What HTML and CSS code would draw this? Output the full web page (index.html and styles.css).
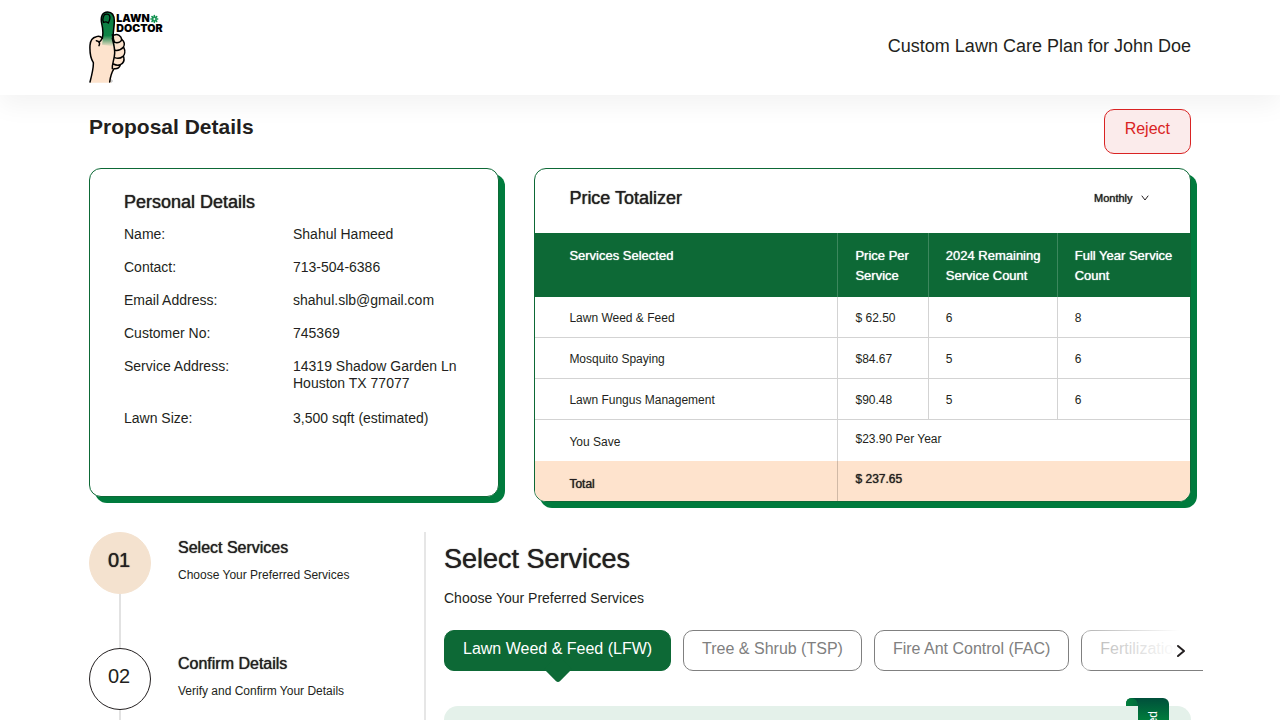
FILE: index.html
```html
<!DOCTYPE html>
<html lang="en">
<head>
  <meta charset="UTF-8" />
  <meta name="viewport" content="width=device-width, initial-scale=1.0"/>
  <title>Lawn Doctor - Custom Lawn Care Plan</title>
  <link rel="stylesheet" href="styles.css">
</head>
<body>
  <header class="site-header">
    <svg class="logo" viewBox="26 19 222 216" role="img" aria-label="Lawn Doctor">
      <defs>
        <linearGradient id="thumb" x1="0" y1="0" x2="0" y2="1">
          <stop offset="0" stop-color="#0b7a41"/>
          <stop offset="0.68" stop-color="#0f8547"/>
          <stop offset="1" stop-color="#fde3cd"/>
        </linearGradient>
      </defs>
      <path d="M29 234 C36 205 40 190 39 174 C30 160 28 140 29 122 C30 106 38 98 48 96 C54 94 60 95 65 96 L98 92 C108 88 118 92 123 100 C132 106 134 116 131 126 C136 138 134 148 130 154 C133 166 129 176 122 180 C120 188 112 192 104 192 C96 204 93 216 91 234 Z" fill="#fde3cd"/>
      <path d="M65 120 C70 92 69 74 64 56 C60 36 66 22 82 22 C98 22 102 34 102 50 C102 68 99 82 101 96 L104 126 Z" fill="url(#thumb)"/>
      <g fill="none" stroke="#000" stroke-width="4.5" stroke-linecap="round" stroke-linejoin="round">
        <path d="M29 232 C36 205 40 190 39 174 C30 160 28 140 29 122 C30 106 38 98 48 96 C56 93 62 96 66 101 C69 86 68 72 64 56 C60 36 66 22 82 22 C98 22 102 34 102 50 C102 68 97 84 99 98"/>
        <path d="M66 100 C63 107 60 110 56 113 M48 108 C57 110 60 116 56 123"/>
        <path d="M102 91 C112 87 123 94 124 104 C124 111 114 116 103 113 C99 106 98 98 96 90 M96 101 C99 115 104 130 103 146 C102 166 94 180 96 192"/>
        <path d="M124 104 C133 110 134 121 129 128 C122 136 112 138 104 137 M130 128 C136 139 133 150 128 155 C120 162 111 162 103 159 M130 156 C133 168 128 177 120 180 C113 183 105 181 99 178 M120 181 C117 190 109 193 101 192 C94 203 90 217 88 232"/>
      </g>
      <path d="M69 36 C72 27 85 26 88 34 C90 40 88 47 84 55 C79 51 75 51 70 53 C67 47 67 41 69 36 Z" fill="#0b7a41" stroke="#000" stroke-width="4"/>
      <text class="logo-text" x="108" y="53">LAWN</text>
      <text class="logo-text" x="108" y="83">DOCTOR</text>
      <g stroke="#129150" stroke-width="5" stroke-linecap="round">
        <path d="M222 33 V53 M212 43 H232 M215 36 L229 50 M229 36 L215 50"/>
      </g>
      <circle cx="222" cy="43" r="4" fill="#fff" stroke="#129150" stroke-width="2"/>
      <circle cx="93" cy="229" r="3" fill="none" stroke="#333" stroke-width="1"/>
    </svg>
    <p class="plan-name">Custom Lawn Care Plan for John Doe</p>
  </header>

  <main class="container">
    <div class="title-row">
      <h1>Proposal Details</h1>
      <button class="reject-btn" type="button">Reject</button>
    </div>

    <div class="cards">
      <section class="card personal">
        <h2 class="card-title">Personal Details</h2>
        <dl class="details">
          <dt>Name:</dt><dd>Shahul Hameed</dd>
          <dt>Contact:</dt><dd>713-504-6386</dd>
          <dt>Email Address:</dt><dd>shahul.slb@gmail.com</dd>
          <dt>Customer No:</dt><dd>745369</dd>
          <dt>Service Address:</dt><dd class="address">14319 Shadow Garden Ln<br>Houston TX 77077</dd>
          <dt>Lawn Size:</dt><dd>3,500 sqft (estimated)</dd>
        </dl>
      </section>

      <section class="card totalizer">
        <div class="totalizer-head">
          <h2 class="card-title">Price Totalizer</h2>
          <div class="period">
            <select id="period" aria-label="Billing period">
              <option>Monthly</option>
              <option>Yearly</option>
            </select>
            <svg class="period-arrow" viewBox="0 0 8 6" aria-hidden="true"><path d="M1 1 L4 5 L7 1"/></svg>
          </div>
        </div>
        <table class="price-table">
          <colgroup>
            <col class="col-name"><col class="col-price"><col class="col-count"><col class="col-year">
          </colgroup>
          <thead>
            <tr>
              <th>Services Selected</th>
              <th>Price Per Service</th>
              <th>2024 Remaining Service Count</th>
              <th>Full Year Service Count</th>
            </tr>
          </thead>
          <tbody>
            <tr><td>Lawn Weed &amp; Feed</td><td>$ 62.50</td><td>6</td><td>8</td></tr>
            <tr><td>Mosquito Spaying</td><td>$84.67</td><td>5</td><td>6</td></tr>
            <tr><td>Lawn Fungus Management</td><td>$90.48</td><td>5</td><td>6</td></tr>
            <tr class="save"><td>You Save</td><td class="sum" colspan="3">$23.90 Per Year</td></tr>
            <tr class="total"><td>Total</td><td class="sum" colspan="3">$ 237.65</td></tr>
          </tbody>
        </table>
      </section>
    </div>

    <div class="wizard">
      <ol class="steps">
        <li class="step active">
          <span class="step-no">01</span>
          <div class="step-text">
            <h3>Select Services</h3>
            <p>Choose Your Preferred Services</p>
          </div>
        </li>
        <li class="step">
          <span class="step-no">02</span>
          <div class="step-text">
            <h3>Confirm Details</h3>
            <p>Verify and Confirm Your Details</p>
          </div>
        </li>
      </ol>

      <section class="services">
        <h2>Select Services</h2>
        <p class="lead">Choose Your Preferred Services</p>

        <div class="tabs-wrap">
          <div class="tabs">
            <button class="tab active" type="button">Lawn Weed &amp; Feed (LFW)</button>
            <button class="tab" type="button">Tree &amp; Shrub (TSP)</button>
            <button class="tab" type="button">Fire Ant Control (FAC)</button>
            <button class="tab" type="button">Fertilization (FER)</button>
          </div>
          <button class="next-btn" type="button" aria-label="Next services">
            <svg viewBox="0 0 8 12" aria-hidden="true"><path d="M1 1 L7 6 L1 11"/></svg>
          </button>
        </div>

        <div class="panel">
          <div class="ribbon">
            <svg class="ribbon-fold" viewBox="0 0 12 8" aria-hidden="true">
              <defs>
                <linearGradient id="fold">
                  <stop offset="0" stop-color="#00803c"/>
                  <stop offset="1" stop-color="#006a3c"/>
                </linearGradient>
              </defs>
              <path d="M0 8 V6 Q0 0 6 0 H12 V8 Z" fill="#004f3b"/>
              <path d="M0 8 V6 Q0 0 6 0 Q12 1 12 8 Z" fill="url(#fold)"/>
            </svg>
            <div class="ribbon-body"><span>Recommended</span></div>
          </div>
        </div>
      </section>
    </div>
  </main>
</body>
</html>
```
FILE: styles.css
```css
* {
  box-sizing: border-box;
}

body {
  font-family: "Liberation Sans", Arial, sans-serif;
  margin: 0;
  background-color: #fff;
  color: #231f20;
}

h1, h2, h3, p, dl, dd, ol {
  margin: 0;
  padding: 0;
}

button, select {
  font-family: inherit;
  cursor: pointer;
}

/* Header */
.site-header {
  display: flex;
  justify-content: space-between;
  align-items: flex-start;
  padding: 11px 89px 12px;
  box-shadow: 0 10px 24px rgba(0, 0, 0, 0.05);
}

.logo {
  display: block;
  width: 74px;
  height: 72px;
}

.logo-text {
  font-family: Inter, "Liberation Sans", sans-serif;
  font-size: 32px;
  font-weight: 900;
  fill: #000;
}

.plan-name {
  margin-top: 24px;
  font-size: 18px;
  line-height: 22px;
}

.container {
  padding: 14px 89px 40px;
}

/* Title row */
.title-row {
  display: flex;
  justify-content: space-between;
  align-items: flex-start;
  margin-bottom: 14px;
}

.title-row h1 {
  font-size: 21px;
  line-height: 36px;
}

.reject-btn {
  height: 45px;
  padding: 0 20px 5px;
  border: 1px solid #d92323;
  border-radius: 10px;
  background-color: #fbebeb;
  color: #d92323;
  font-size: 16px;
}

/* Cards */
.cards {
  display: grid;
  grid-template-columns: 5fr 8fr;
  gap: 35px;
  align-items: start;
}

.card {
  border: 1px solid #0d6936;
  border-radius: 12px;
  background-color: #fff;
  box-shadow: 6px 6px 0 #007b3d;
}

.card-title,
.price-table th,
.price-table .total td,
.period select,
.step-text h3,
.active .step-no,
.services h2 {
  font-weight: 400;
  text-shadow: 0 0 1px currentColor;
}

.card-title {
  font-size: 18px;
  line-height: 22px;
}

.personal {
  min-height: 329px;
  padding: 22px 34px;
}

.details {
  display: grid;
  grid-template-columns: 169px 1fr;
  row-gap: 16px;
  margin-top: 13px;
  font-size: 14px;
  line-height: 17px;
}

.details .address {
  padding-bottom: 2px;
}

.totalizer {
  overflow: hidden;
}

.totalizer-head {
  display: flex;
  justify-content: space-between;
  padding: 18px 41px 24px 34px;
}

.period {
  display: flex;
  align-items: center;
}

.period select {
  appearance: none;
  height: 22px;
  margin-right: -8px;
  padding: 0 16px 0 0;
  border: none;
  background: none;
  color: #231f20;
  font-size: 11px;
}

.period-arrow {
  width: 8px;
  height: 6px;
  pointer-events: none;
}

.period-arrow path,
.next-btn path {
  fill: none;
  stroke: #231f20;
  stroke-linecap: round;
  stroke-linejoin: round;
}

.price-table {
  width: 100%;
  table-layout: fixed;
  border-spacing: 0;
  font-size: 12px;
  line-height: 20px;
}

.col-name { width: 46.3%; }
.col-price { width: 13.8%; }
.col-count { width: 19.7%; }
.col-year { width: 20.2%; }

.price-table th {
  padding: 13px 12px 11px 17px;
  background-color: #0d6936;
  border-right: 1px solid #3c875d;
  color: #fff;
  font-size: 13px;
  text-align: left;
  vertical-align: top;
}

.price-table td {
  height: 41px;
  padding: 2px 17px 0;
  border-right: 1px solid #d3d3d3;
  border-bottom: 1px solid #d3d3d3;
}

.price-table th:first-child,
.price-table td:first-child {
  padding-left: 34px;
}

.price-table th:last-child,
.price-table td:last-child {
  border-right: none;
}

.price-table .save td,
.price-table .total td {
  border-bottom: none;
}

.price-table .total td {
  height: 40px;
  padding-top: 5px;
  background-color: #fee3cd;
  border-color: #d0b9a6;
}

.price-table td.sum,
.price-table .total td.sum {
  padding-top: 0;
  padding-bottom: 4px;
}

/* Steps */
.wizard {
  display: grid;
  grid-template-columns: 337px minmax(0, 1fr);
  column-gap: 18px;
  margin-top: 30px;
}

.steps {
  list-style: none;
  border-right: 2px solid #e6e6e6;
}

.step {
  display: grid;
  grid-template-columns: 62px 1fr;
  grid-template-rows: 62px 54px;
  column-gap: 27px;
}

.step::after {
  content: "";
  width: 2px;
  background-color: #e2e2e2;
  justify-self: center;
}

.step-no {
  display: flex;
  justify-content: center;
  align-items: center;
  padding: 0 2px 5px 0;
  border: 1px solid #231f20;
  border-radius: 50%;
  font-size: 20px;
}

.active .step-no {
  background-color: #f4e2cf;
  border-color: #f4e2cf;
}

.step-text {
  padding-top: 6px;
}

.step-text h3 {
  font-size: 16px;
  line-height: 20px;
}

.step-text p {
  margin-top: 9px;
  font-size: 12px;
  line-height: 16px;
}

/* Services */
.services {
  padding-top: 10px;
}

.services h2 {
  font-size: 27px;
  line-height: 34px;
}

.lead {
  margin-top: 13px;
  font-size: 14px;
  line-height: 18px;
}

.tabs-wrap {
  position: relative;
  margin: 23px -12px 0 0;
}

.tabs {
  display: flex;
  gap: 12px;
  padding-bottom: 35px;
  overflow: hidden;
}

.tab {
  position: relative;
  flex: none;
  height: 41px;
  padding: 0 18px 4px;
  border: 1px solid #808080;
  border-radius: 10px;
  background-color: #fff;
  color: #808080;
  font-size: 16px;
}

.tab.active {
  background-color: #0d6936;
  border-color: #0d6936;
  color: #fff;
  z-index: 0;
}

.tab.active::after {
  content: "";
  position: absolute;
  left: 50%;
  bottom: -9px;
  width: 20px;
  height: 20px;
  margin-left: -10px;
  border-radius: 3px;
  background-color: #0d6936;
  transform: rotate(45deg);
  z-index: -1;
}

/* fades the tabs out under the arrow */
.next-btn {
  position: absolute;
  top: 0;
  right: 0;
  width: 120px;
  height: 40px;
  padding: 0 18px 0 0;
  border: none;
  background: linear-gradient(to right, rgba(255, 255, 255, 0.4), #fff 80%);
  text-align: right;
}

.next-btn svg {
  width: 8px;
  height: 12px;
  vertical-align: middle;
  overflow: visible;
}

.next-btn path {
  stroke-width: 2;
}

.panel {
  position: relative;
  min-height: 240px;
  border-radius: 14px;
  background-color: #e4f1ea;
}

.ribbon {
  position: absolute;
  top: -8px;
  right: 22px;
  display: flex;
  align-items: flex-start;
}

.ribbon-fold {
  width: 12px;
  height: 8px;
}

.ribbon-body {
  width: 31px;
  padding: 13px 8px;
  border-top-right-radius: 6px;
  background: linear-gradient(#004f3b, #00803c 24px);
  color: #fff;
  font-size: 12px;
  line-height: 15px;
}

.ribbon-body span {
  display: block;
  writing-mode: vertical-rl;
  transform: rotate(180deg);
}
```
